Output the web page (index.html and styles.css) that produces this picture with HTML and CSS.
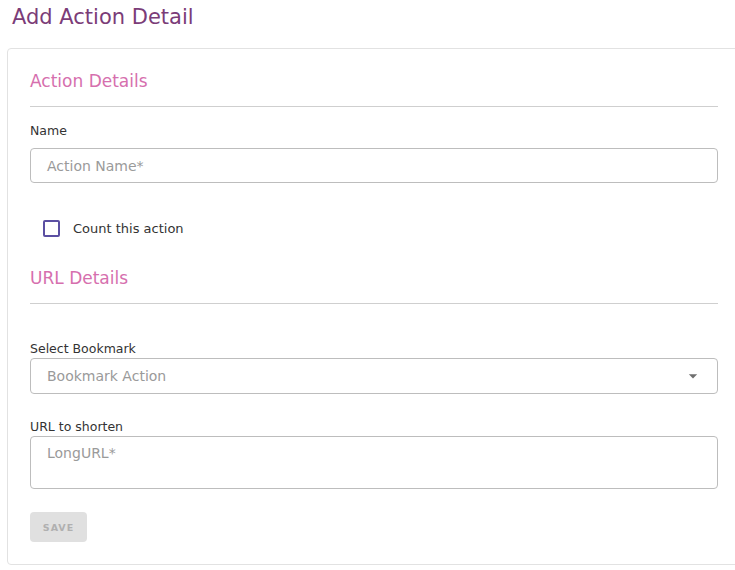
FILE: index.html
```html
<!DOCTYPE html>
<html lang="en">
<head>
<meta charset="utf-8">
<title>Add Action Detail</title>
<link rel="stylesheet" href="styles.css">
</head>
<body>
<div class="page">
  <h1 class="page-title">Add Action Detail</h1>
  <div class="card">
    <h2 class="section-title">Action Details</h2>
    <hr class="divider">
    <div class="field">
      <label class="field-label">Name</label>
      <div class="input"><span class="placeholder">Action Name*</span></div>
    </div>
    <label class="check-row">
      <span class="check-box"></span>
      <span class="check-text">Count this action</span>
    </label>
    <h2 class="section-title section-title-2">URL Details</h2>
    <hr class="divider">
    <div class="field field-select">
      <label class="field-label">Select Bookmark</label>
      <div class="input select">
        <span class="placeholder">Bookmark Action</span>
        <svg class="arrow" viewBox="0 0 24 24" width="20" height="20"><path d="M7 10l5 5 5-5z"/></svg>
      </div>
    </div>
    <div class="field field-url">
      <label class="field-label">URL to shorten</label>
      <div class="input textarea"><span class="placeholder">LongURL*</span></div>
    </div>
    <button class="save" disabled>SAVE</button>
  </div>
</div>
</body>
</html>
```
FILE: styles.css
```css
html, body {
  margin: 0;
  padding: 0;
  background: #ffffff;
  overflow: hidden;
}
body {
  font-family: "DejaVu Sans", "Open Sans", sans-serif;
  color: #333;
}
.page {
  padding-left: 7px;
  width: 760px;
}
.page-title {
  margin: 0;
  padding: 3px 0 0 5px;
  height: 45px;
  font-size: 21px;
  line-height: 28px;
  font-weight: 400;
  color: #7b3c78;
}
.card {
  box-sizing: border-box;
  width: 734px;
  border: 1px solid #e2e2e2;
  border-radius: 4px;
  padding: 18px 22px 22px;
}
.section-title {
  margin: 0;
  font-size: 17px;
  line-height: 28px;
  font-weight: 400;
  color: #d66fae;
}
.section-title-2 {
  margin-top: 27px;
}
.divider {
  margin: 11px 0 0;
  border: 0;
  border-top: 1px solid #cfcfcf;
  height: 0;
}
.field {
  display: flex;
  flex-direction: column;
}
.field-label {
  font-size: 12.5px;
  line-height: 18px;
  color: #333;
  margin-top: 15px;
  margin-bottom: 8px;
}
.field-select .field-label {
  margin-top: 36px;
  margin-bottom: 0;
}
.field-url .field-label {
  margin-top: 24px;
  margin-bottom: 0;
}
.input {
  box-sizing: border-box;
  height: 35px;
  border: 1px solid #bdbdbd;
  border-radius: 4px;
  display: flex;
  align-items: center;
  padding: 0 16px;
}
.placeholder {
  font-size: 14px;
  color: #9a9a9a;
}
.select {
  height: 36px;
  justify-content: space-between;
  padding-right: 14px;
}
.arrow {
  fill: #6f6f6f;
}
.textarea {
  height: 53px;
  align-items: flex-start;
  padding-top: 8px;
}
.check-row {
  display: flex;
  align-items: center;
  margin-top: 36px;
  padding-left: 13px;
  height: 18px;
}
.check-box {
  box-sizing: border-box;
  width: 17px;
  height: 17px;
  border: 2px solid #5b4fa2;
  border-radius: 2px;
}
.check-text {
  margin-left: 13px;
  font-size: 13px;
  color: #333;
}
.save {
  display: block;
  margin-top: 23px;
  width: 57px;
  height: 30px;
  border: 0;
  border-radius: 4px;
  background: #e0e0e0;
  color: #b0b0b0;
  font-family: inherit;
  font-size: 9.5px;
  font-weight: 600;
  letter-spacing: 1px;
  padding: 0;
}
```
